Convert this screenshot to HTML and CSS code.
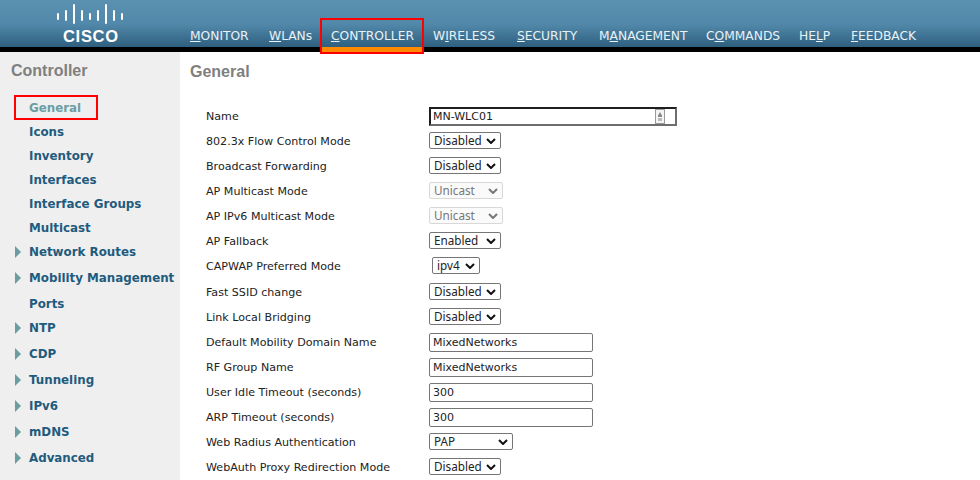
FILE: index.html
```html
<!DOCTYPE html>
<html lang="en">
<head>
<meta charset="utf-8">
<title>Controller General</title>
<link rel="stylesheet" href="styles.css">
</head>
<body>
<header class="topbar">
  <div class="logo">
    <svg class="logo-bars" width="68" height="20" viewBox="0 0 68 20" aria-hidden="true">
      <g stroke="#fff" stroke-width="2" stroke-linecap="round" fill="none">
        <path d="M2 10v5M10 7v9M18 1v18M26 7v9M34 10v5M42 7v9M50 1v18M58 7v9M66 10v5"/>
      </g>
    </svg>
    <span class="logo-text">CISCO</span>
  </div>
  <nav class="nav">
    <a class="nav-item"><u>M</u>ONITOR</a>
    <a class="nav-item"><u>W</u>LANs</a>
    <a class="nav-item active"><u>C</u>ONTROLLER</a>
    <a class="nav-item">W<u>I</u>RELESS</a>
    <a class="nav-item"><u>S</u>ECURITY</a>
    <a class="nav-item">M<u>A</u>NAGEMENT</a>
    <a class="nav-item">C<u>O</u>MMANDS</a>
    <a class="nav-item">HE<u>L</u>P</a>
    <a class="nav-item"><u>F</u>EEDBACK</a>
  </nav>
</header>
<div class="page">
  <aside class="sidebar">
    <h2 class="side-title">Controller</h2>
    <ul class="side-list">
      <li class="side-item current"><span>General</span></li>
      <li class="side-item">Icons</li>
      <li class="side-item">Inventory</li>
      <li class="side-item">Interfaces</li>
      <li class="side-item">Interface Groups</li>
      <li class="side-item">Multicast</li>
      <li class="side-item arrow">Network Routes</li>
      <li class="side-item arrow">Mobility Management</li>
      <li class="side-item">Ports</li>
      <li class="side-item arrow">NTP</li>
      <li class="side-item arrow">CDP</li>
      <li class="side-item arrow">Tunneling</li>
      <li class="side-item arrow">IPv6</li>
      <li class="side-item arrow">mDNS</li>
      <li class="side-item arrow">Advanced</li>
    </ul>
  </aside>
  <main class="content">
    <h1 class="content-title">General</h1>
    <form class="form">
      <div class="row"><label class="lbl">Name</label>
        <div class="name-box"><input class="name-input" value="MN-WLC01"><svg class="key" width="10" height="15" viewBox="0 0 10 15" aria-hidden="true"><rect x=".5" y=".5" width="9" height="14" fill="#f4f4f4" stroke="#9a9a9a"/><path d="M5 3l1.7 3H3.3z" fill="#888"/><rect x="3" y="6" width="4" height="2" fill="#888"/><rect x="3" y="9" width="4" height="3" fill="#bbb"/></svg></div></div>
      <div class="row"><label class="lbl">802.3x Flow Control Mode</label><select class="sel"><option>Disabled</option></select></div>
      <div class="row"><label class="lbl">Broadcast Forwarding</label><select class="sel"><option>Disabled</option></select></div>
      <div class="row"><label class="lbl">AP Multicast Mode</label><select class="sel wide-off" disabled><option>Unicast</option></select></div>
      <div class="row"><label class="lbl">AP IPv6 Multicast Mode</label><select class="sel wide-off" disabled><option>Unicast</option></select></div>
      <div class="row"><label class="lbl">AP Fallback</label><select class="sel"><option>Enabled</option></select></div>
      <div class="row tall"><label class="lbl">CAPWAP Preferred Mode</label><select class="sel small"><option>ipv4</option></select></div>
      <div class="row"><label class="lbl">Fast SSID change</label><select class="sel"><option>Disabled</option></select></div>
      <div class="row"><label class="lbl">Link Local Bridging</label><select class="sel"><option>Disabled</option></select></div>
      <div class="row"><label class="lbl">Default Mobility Domain Name</label><input class="txt" value="MixedNetworks"></div>
      <div class="row"><label class="lbl">RF Group Name</label><input class="txt" value="MixedNetworks"></div>
      <div class="row"><label class="lbl">User Idle Timeout (seconds)</label><input class="txt" value="300"></div>
      <div class="row"><label class="lbl">ARP Timeout (seconds)</label><input class="txt" value="300"></div>
      <div class="row"><label class="lbl">Web Radius Authentication</label><select class="sel pap"><option>PAP</option></select></div>
      <div class="row"><label class="lbl">WebAuth Proxy Redirection Mode</label><select class="sel"><option>Disabled</option></select></div>
    </form>
  </main>
</div>
</body>
</html>
```
FILE: styles.css
```css
*, *::before, *::after { box-sizing: border-box; }
html, body { margin: 0; height: 480px; overflow: hidden; background: #fff; }
body { font-family: "DejaVu Sans", Verdana, sans-serif; }

.topbar {
  height: 52px;
  display: flex;
  border-bottom: 5px solid #000;
  background: linear-gradient(#5a91b1 0, #5289aa 50%, #2f5f7f 100%);
}
.logo { width: 190px; padding: 4px 0 0 56px; display: flex; flex-direction: column; }
.logo-bars { display: block; }
.logo-text {
  margin: 4px 0 0 7px;
  font: bold 16.5px/16px "Liberation Sans", Arial, sans-serif;
  letter-spacing: .7px; color: #fff;
}
.nav {
  display: grid; column-gap: 20px; align-items: start; font-size: 12.25px;
  grid-template-columns: 59px 42px 82px 64px 62px 87px 73px 32px 65px;
}
.nav-item { color: #e8f2f7; padding-top: 29px; line-height: 15px; height: 47px; white-space: nowrap; position: relative; }
.nav-item.active::before {
  content: "";
  position: absolute; left: -11px; width: 104px; top: 18px; height: 36px;
  border: 2px solid #f00;
  background: linear-gradient(to bottom, transparent 0, transparent 27px, #ff8a00 27px);
}

.page { display: flex; height: 428px; }
.sidebar { width: 180px; background: #efefef; padding: 10px 0 0; }
.side-title {
  margin: 0 0 0 11px; height: 26px;
  font: bold 16px/17px "Liberation Sans", Arial, sans-serif; color: #7f7f7f;
}
.side-list { list-style: none; margin: 0; padding: 8px 0 0; }
.side-item {
  height: 24px; padding-left: 29px; position: relative;
  font-size: 11.85px; font-weight: bold; line-height: 24px; color: #1f5b7d; white-space: nowrap;
}
.side-item.arrow { height: 26px; }
.side-item.arrow::before {
  content: ""; position: absolute; left: 15px; top: 6px;
  border-left: 6px solid #6b9c9f; border-top: 6px solid transparent; border-bottom: 6px solid transparent;
}
.side-item.current { color: #6a9ea5; }
.side-item.current::after {
  content: ""; position: absolute; left: 14px; top: -1px; width: 84px; height: 25px;
  border: 2px solid #f00;
}

.content { flex: 1; padding: 11px 0 0 10px; }
.content-title {
  margin: 0; height: 41px;
  font: bold 16px/18px "Liberation Sans", Arial, sans-serif; color: #7f7f7f;
}
.form { padding-left: 16px; }
.row { display: flex; align-items: center; height: 25px; }
.row.tall { height: 26px; padding-bottom: 1px; }
.lbl { width: 223px; font-size: 11.1px; color: #222; white-space: nowrap; }

.name-box {
  width: 248px; height: 19px; display: flex; align-items: center; justify-content: space-between;
  border: 2px solid; border-color: #1f1f1f #6e6e6e #6e6e6e #1f1f1f; padding-right: 10px; background: #fff;
}
.name-input { border: 0; outline: 0; padding: 0 0 0 2px; width: 200px; background: none; font: 11px "DejaVu Sans", sans-serif; color: #222; }
.key { flex: none; }

.txt {
  width: 164px; height: 19px; padding: 0 3px;
  border: 1px solid #767676; border-radius: 2px; background: #fff;
  font: 11px "DejaVu Sans", sans-serif; color: #222;
}
.sel {
  appearance: none; -webkit-appearance: none;
  width: 72px; height: 17px; margin-bottom: 2px; padding: 0 0 0 4px;
  border: 1px solid #767676; border-radius: 2px;
  font: 11.7px/15px "Noto Sans", Arial, sans-serif; color: #222;
  background: #fff url("data:image/svg+xml,%3Csvg xmlns='http://www.w3.org/2000/svg' width='10' height='6'%3E%3Cpath d='M1 1l4 4 4-4' fill='none' stroke='%23111' stroke-width='2'/%3E%3C/svg%3E") no-repeat right 4px center;
}
.sel.wide-off {
  width: 74px; border-color: #d8d8d8; color: #777; background-color: #fafafa; opacity: 1;
  background-image: url("data:image/svg+xml,%3Csvg xmlns='http://www.w3.org/2000/svg' width='10' height='6'%3E%3Cpath d='M1 1l4 4 4-4' fill='none' stroke='%23777' stroke-width='2'/%3E%3C/svg%3E");
}
.sel.small { width: 48px; margin-left: 3px; }
.sel.pap { width: 84px; }
```
